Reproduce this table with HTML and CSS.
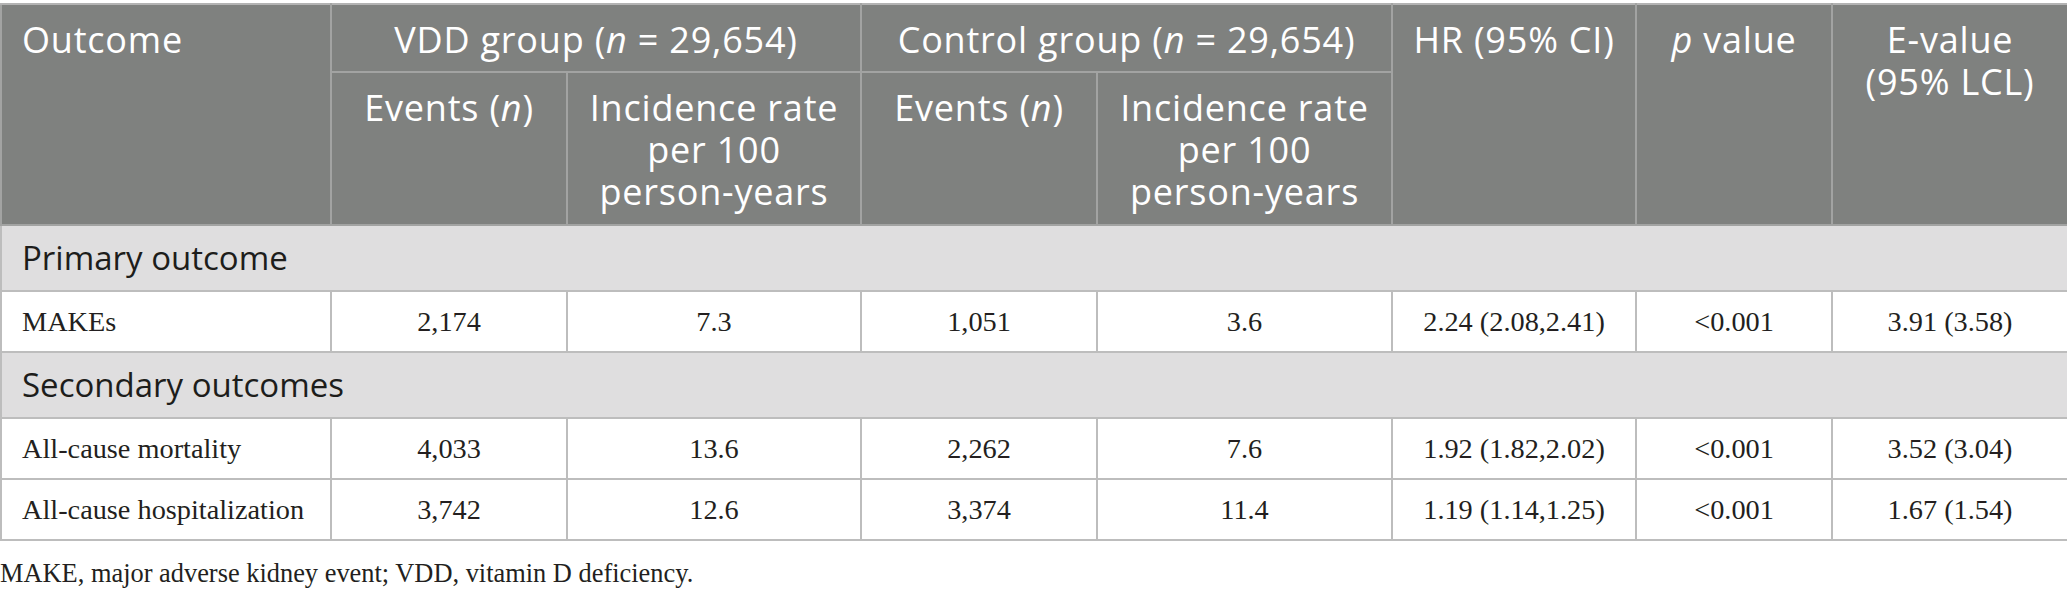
FILE: index.html
```html
<!DOCTYPE html>
<html lang="en">
<head>
<meta charset="utf-8">
<title>Outcomes table</title>
<link rel="stylesheet" href="styles.css">
</head>
<body>
<div class="page">
<table class="data">
<colgroup>
<col class="c-outcome">
<col class="c-events">
<col class="c-rate">
<col class="c-events">
<col class="c-rate2">
<col class="c-hr">
<col class="c-p">
<col class="c-e">
</colgroup>
<thead>
<tr class="h1">
<th rowspan="2" class="left">Outcome</th>
<th colspan="2">VDD group (<i>n</i> = 29,654)</th>
<th colspan="2">Control group (<i>n</i> = 29,654)</th>
<th rowspan="2">HR (95% CI)</th>
<th rowspan="2"><i>p</i> value</th>
<th rowspan="2"><span class="ln">E-value</span><span class="ln">(95% LCL)</span></th>
</tr>
<tr class="h2">
<th>Events (<i>n</i>)</th>
<th>Incidence rate per 100 person-years</th>
<th>Events (<i>n</i>)</th>
<th>Incidence rate per 100 person-years</th>
</tr>
</thead>
<tbody>
<tr class="section"><td colspan="8">Primary outcome</td></tr>
<tr class="row">
<td class="left">MAKEs</td><td>2,174</td><td>7.3</td><td>1,051</td><td>3.6</td><td>2.24 (2.08,2.41)</td><td>&lt;0.001</td><td>3.91 (3.58)</td>
</tr>
<tr class="section"><td colspan="8">Secondary outcomes</td></tr>
<tr class="row">
<td class="left">All-cause mortality</td><td>4,033</td><td>13.6</td><td>2,262</td><td>7.6</td><td>1.92 (1.82,2.02)</td><td>&lt;0.001</td><td>3.52 (3.04)</td>
</tr>
<tr class="row">
<td class="left">All-cause hospitalization</td><td>3,742</td><td>12.6</td><td>3,374</td><td>11.4</td><td>1.19 (1.14,1.25)</td><td>&lt;0.001</td><td>1.67 (1.54)</td>
</tr>
</tbody>
</table>
<p class="note">MAKE, major adverse kidney event; VDD, vitamin D deficiency.</p>
</div>
</body>
</html>
```

FILE: styles.css
```css
html, body {
  margin: 0;
  padding: 0;
  background: #ffffff;
}

.page {
  padding-top: 3px;
  width: 2067px;
}

.data {
  width: 2067px;
  table-layout: fixed;
  border-collapse: collapse;
  border: 2px solid #bdbdbd;
}

.c-outcome { width: 330px; }
.c-events { width: 236px; }
.c-rate { width: 294px; }
.c-rate2 { width: 295px; }
.c-hr { width: 244px; }
.c-p { width: 196px; }
.c-e { width: 236px; }

.data th {
  background: #7f817f;
  color: #ffffff;
  font-family: "Open Sans", "Noto Sans", sans-serif;
  font-weight: 400;
  font-size: 36px;
  letter-spacing: 0.8px;
  line-height: 42px;
  text-align: center;
  vertical-align: top;
  padding: 14px 16px 10px 16px;
  border: 2px solid #a2a3a2;
  border-top-color: #b3b3b3;
}

.data th .ln {
  display: block;
}

.data th.left { text-align: left; padding-left: 20px; }

.data th i {
  font-style: italic;
}

.data tr.h1 { height: 68px; }
.data tr.h2 { height: 153px; }

.data tr.section td {
  background: #dfdedf;
  color: #1d1d1b;
  font-family: "Open Sans", "Noto Sans", sans-serif;
  font-size: 33px;
  line-height: 40px;
  text-align: left;
  vertical-align: middle;
  padding: 9px 20px 9px 20px;
  border: 2px solid #bdbdbd;
}

.data tr.section { height: 66px; }

.data tr.row { height: 61px; }

.data tr.row td {
  font-family: "Liberation Serif", "Times New Roman", serif;
  font-size: 28.3px;
  line-height: 32px;
  color: #231f20;
  text-align: center;
  vertical-align: middle;
  padding: 5px 20px 5px 20px;
  border: 2px solid #bdbdbd;
}

.data tr.row td.left { text-align: left; }

.note {
  margin: 17px 0 0 0;
  font-family: "Liberation Serif", "Times New Roman", serif;
  font-size: 26.4px;
  line-height: 30px;
  color: #231f20;
}
```
